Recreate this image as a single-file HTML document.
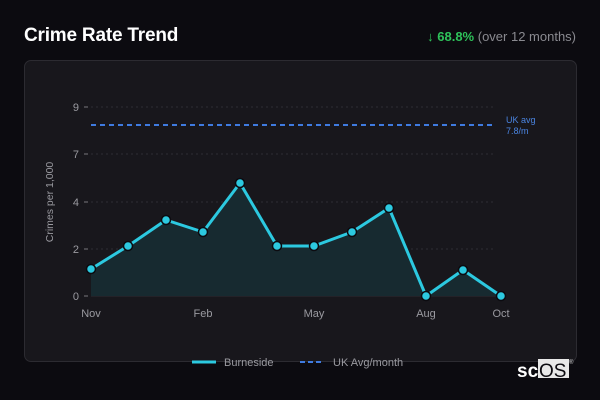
<!DOCTYPE html>
<html><head><style>
body{margin:0;width:600px;height:400px;background:#0c0b10;font-family:"Liberation Sans","DejaVu Sans",sans-serif;overflow:hidden;position:relative}
.t{position:absolute;left:24px;top:25px;color:#fff;font-weight:bold;font-size:19px;letter-spacing:-0.2px}
.r{position:absolute;right:24px;top:29px;font-size:13px;color:#8a8a90}
.r b{color:#2ec25a}
.card{position:absolute;left:24px;top:60px;width:551px;height:300px;background:#18171c;border:1px solid #2c2b31;border-radius:7px}
svg{position:absolute;left:0;top:0}
</style></head><body>
<div class="t">Crime Rate Trend</div>
<div class="r"><b>↓ 68.8%</b> (over 12 months)</div>
<div class="card"></div>
<svg width="600" height="400" font-family="Liberation Sans, sans-serif">
<g stroke="#2e2d33" stroke-dasharray="2,3" stroke-width="1">
<line x1="91" y1="107" x2="495" y2="107"/><line x1="91" y1="154" x2="495" y2="154"/><line x1="91" y1="202" x2="495" y2="202"/><line x1="91" y1="249" x2="495" y2="249"/>
</g>
<line x1="91" y1="296" x2="501" y2="296" stroke="#2e2d33"/>
<g fill="#9a9aa0" font-size="11" text-anchor="end">
<text x="79" y="111">9</text><text x="79" y="158">7</text><text x="79" y="206">4</text><text x="79" y="253">2</text><text x="79" y="300">0</text>
</g>
<g stroke="#77777d"><line x1="84" y1="107" x2="88" y2="107"/><line x1="84" y1="154" x2="88" y2="154"/><line x1="84" y1="202" x2="88" y2="202"/><line x1="84" y1="249" x2="88" y2="249"/><line x1="84" y1="296" x2="88" y2="296"/></g>
<text transform="translate(53,202) rotate(-90)" fill="#9a9aa0" font-size="10.5" text-anchor="middle">Crimes per 1,000</text>
<g fill="#9a9aa0" font-size="11" text-anchor="middle">
<text x="91" y="317">Nov</text><text x="203" y="317">Feb</text><text x="314" y="317">May</text><text x="426" y="317">Aug</text><text x="501" y="317">Oct</text>
</g>
<line x1="91" y1="125" x2="495" y2="125" stroke="#3f7be0" stroke-width="2" stroke-dasharray="5,4"/>
<text x="506" y="123" fill="#4a84e0" font-size="9">UK avg</text>
<text x="506" y="134" fill="#4a84e0" font-size="9">7.8/m</text>
<polygon fill="#172a30" points="91,296 91,269 128,246 166,220 203,232 240,183 277,246 314,246 352,232 389,208 426,296 463,270 501,296"/>
<polyline fill="none" stroke="#2cc9e0" stroke-width="3" stroke-linejoin="round" points="91,269 128,246 166,220 203,232 240,183 277,246 314,246 352,232 389,208 426,296 463,270 501,296"/>
<g fill="#2cc9e0" stroke="#0c0b10" stroke-width="1.5">
<circle cx="91" cy="269" r="4.5"/><circle cx="128" cy="246" r="4.5"/><circle cx="166" cy="220" r="4.5"/><circle cx="203" cy="232" r="4.5"/><circle cx="240" cy="183" r="4.5"/><circle cx="277" cy="246" r="4.5"/><circle cx="314" cy="246" r="4.5"/><circle cx="352" cy="232" r="4.5"/><circle cx="389" cy="208" r="4.5"/><circle cx="426" cy="296" r="4.5"/><circle cx="463" cy="270" r="4.5"/><circle cx="501" cy="296" r="4.5"/>
</g>
<line x1="192" y1="362" x2="216" y2="362" stroke="#2cc9e0" stroke-width="3"/>
<text x="224" y="366" fill="#9a9aa0" font-size="11">Burneside</text>
<line x1="300" y1="362" x2="324" y2="362" stroke="#3f7be0" stroke-width="2" stroke-dasharray="5,3"/>
<text x="333" y="366" fill="#9a9aa0" font-size="11">UK Avg/month</text>
<text x="517" y="377" fill="#fff" font-size="19" font-weight="bold">sc</text>
<rect x="538" y="359" width="31" height="19" fill="#e8e8e8"/>
<text x="539" y="377" fill="#0c0b10" font-size="19">OS</text>
<text x="569" y="364" fill="#ccc" font-size="6">®</text>
</svg>
</body></html>
